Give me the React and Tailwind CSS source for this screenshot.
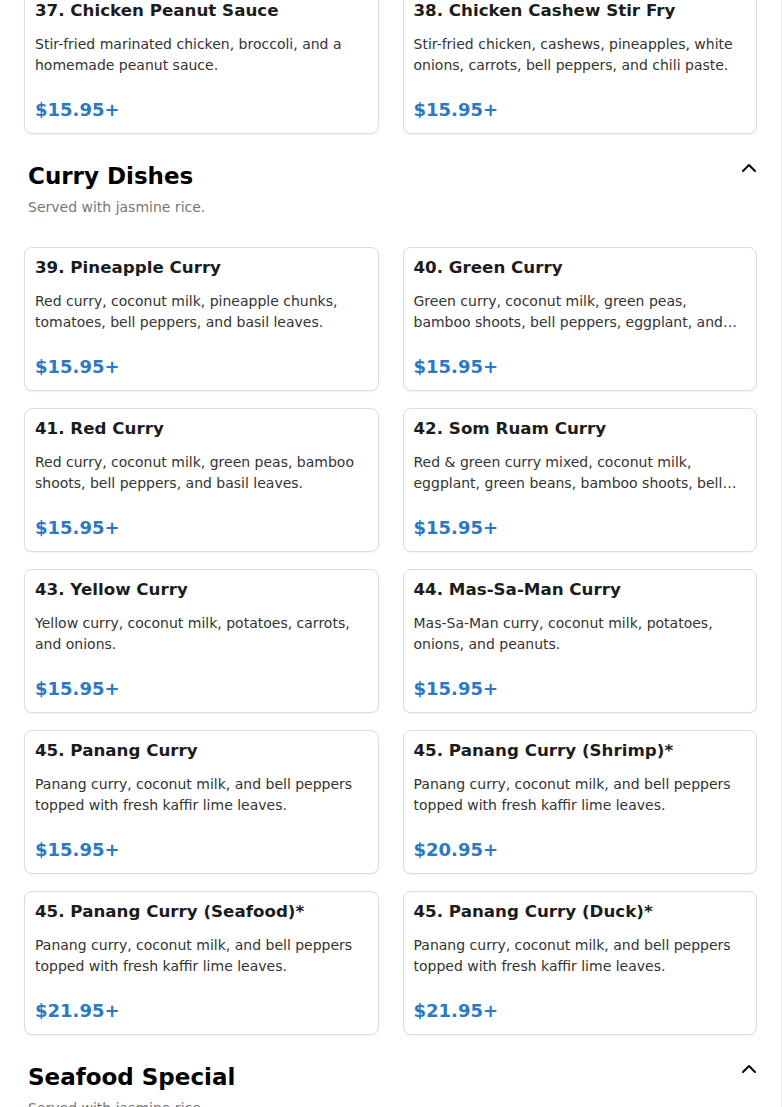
import { ChevronUp } from "lucide-react";

const prevItems = [
    {
        name: "37. Chicken Peanut Sauce",
        desc: "Stir-fried marinated chicken, broccoli, and a homemade peanut sauce.",
        price: "$15.95+",
    },
    {
        name: "38. Chicken Cashew Stir Fry",
        desc: "Stir-fried chicken, cashews, pineapples, white onions, carrots, bell peppers, and chili paste.",
        price: "$15.95+",
    },
];

const panang = "Panang curry, coconut milk, and bell peppers topped with fresh kaffir lime leaves.";

const curryItems = [
    {
        name: "39. Pineapple Curry",
        desc: "Red curry, coconut milk, pineapple chunks, tomatoes, bell peppers, and basil leaves.",
        price: "$15.95+",
    },
    {
        name: "40. Green Curry",
        desc: "Green curry, coconut milk, green peas, bamboo shoots, bell peppers, eggplant, and basil leaves.",
        price: "$15.95+",
    },
    {
        name: "41. Red Curry",
        desc: "Red curry, coconut milk, green peas, bamboo shoots, bell peppers, and basil leaves.",
        price: "$15.95+",
    },
    {
        name: "42. Som Ruam Curry",
        desc: "Red & green curry mixed, coconut milk, eggplant, green beans, bamboo shoots, bell peppers, and basil leaves.",
        price: "$15.95+",
    },
    {
        name: "43. Yellow Curry",
        desc: "Yellow curry, coconut milk, potatoes, carrots, and onions.",
        price: "$15.95+",
    },
    {
        name: "44. Mas-Sa-Man Curry",
        desc: "Mas-Sa-Man curry, coconut milk, potatoes, onions, and peanuts.",
        price: "$15.95+",
    },
    { name: "45. Panang Curry", desc: panang, price: "$15.95+" },
    { name: "45. Panang Curry (Shrimp)*", desc: panang, price: "$20.95+" },
    { name: "45. Panang Curry (Seafood)*", desc: panang, price: "$21.95+" },
    { name: "45. Panang Curry (Duck)*", desc: panang, price: "$21.95+" },
];

function MenuCard({ item }) {
    return (
        <div className="flex flex-col rounded-lg border border-[#dcdcdc] bg-white px-[10px] pt-[10px] pb-[11px] shadow-[0_1px_2px_rgba(0,0,0,0.05)]">
            <h3 className="text-[16.7px] font-bold leading-[19px] text-[#1c1c1c]">{item.name}</h3>
            <p className="mt-[14px] line-clamp-2 min-h-[42px] text-sm leading-[21px] text-[#333]">
                {item.desc}
            </p>
            <div className="mt-[22px] text-lg font-bold leading-6 text-[#2b79c4]">{item.price}</div>
        </div>
    );
}

function CardGrid({ items }) {
    return (
        <div className="grid grid-cols-2 gap-x-6 gap-y-[17px]">
            {items.map((item, i) => (
                <MenuCard key={i} item={item} />
            ))}
        </div>
    );
}

function SectionHeader({ title, note }) {
    return (
        <div className="mt-[26px] pl-1">
            <div className="flex items-start justify-between">
                <h2 className="text-[23px] font-bold leading-8 text-black">{title}</h2>
                <button className="-mr-[4px] -mt-[4px] text-black">
                    <ChevronUp size={24} strokeWidth={2} />
                </button>
            </div>
            <p className="mt-[5px] text-sm leading-5 text-[#777]">{note}</p>
        </div>
    );
}

export default function App() {
    return (
        <div className="h-screen overflow-hidden border-r border-[#ececec] bg-white font-['DejaVu_Sans',sans-serif]">
            <div className="-mt-[10px] px-6">
                <CardGrid items={prevItems} />

                <SectionHeader title="Curry Dishes" note="Served with jasmine rice." />
                <div className="mt-[30px]">
                    <CardGrid items={curryItems} />
                </div>

                <SectionHeader title="Seafood Special" note="Served with jasmine rice." />
            </div>
        </div>
    );
}
